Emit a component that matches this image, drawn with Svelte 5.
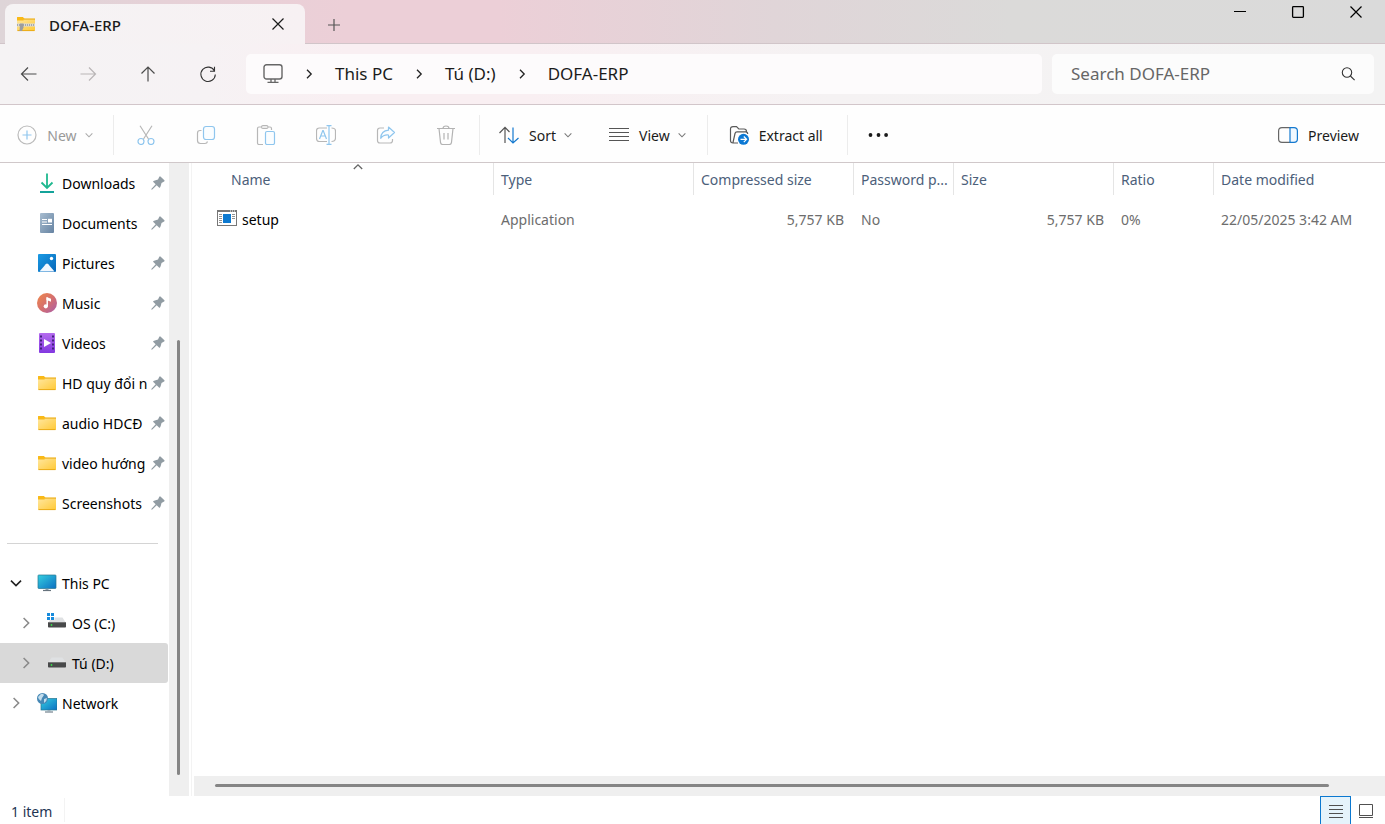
<script>
  const places = [
    { name: 'Downloads', icon: 'downloads' },
    { name: 'Documents', icon: 'documents' },
    { name: 'Pictures', icon: 'pictures' },
    { name: 'Music', icon: 'music' },
    { name: 'Videos', icon: 'videos' },
    { name: 'HD quy đổi n', icon: 'folder' },
    { name: 'audio HDCĐ', icon: 'folder' },
    { name: 'video hướng', icon: 'folder' },
    { name: 'Screenshots', icon: 'folder' }
  ];
  const devices = [
    { name: 'This PC', icon: 'pc', open: true },
    { name: 'OS (C:)', icon: 'osdrive', child: true },
    { name: 'Tú (D:)', icon: 'drive', child: true, selected: true },
    { name: 'Network', icon: 'network' }
  ];
  const columns = [
    { name: 'Name', width: 300 },
    { name: 'Type', width: 200 },
    { name: 'Compressed size', width: 160 },
    { name: 'Password p...', width: 100 },
    { name: 'Size', width: 160 },
    { name: 'Ratio', width: 100 },
    { name: 'Date modified' }
  ];
  const crumbs = ['This PC', 'Tú (D:)', 'DOFA-ERP'];
  const edits = ['Cut', 'Copy', 'Paste', 'Rename', 'Share', 'Delete'];
  let query = $state('');
</script>

{#snippet icon(name)}
  <svg class="icon" width="20" height="20" viewBox="0 0 20 20" fill="none" aria-hidden="true">
    {#if name === 'downloads'}
      <path d="M10 .5v14M4.500 9.500 10 15l5.500-5.500" stroke="#1fb88f" stroke-width="1.800" />
      <path d="M3 19h14" stroke="#14a39a" stroke-width="2" />
    {:else if name === 'documents'}
      <rect x="3" y="0" width="14" height="20" rx="1" fill="url(#docFill)" />
      <path d="M5 6.500h5M5 9h5M5 11.500h10" stroke="#fff" stroke-width="1.200" />
      <path d="M11 5.800h4v3.700h-4z" fill="#fff" />
    {:else if name === 'pictures'}
      <rect x="1" y="1" width="18" height="18" rx="1" fill="url(#picFill)" />
      <path d="m2.500 18.500 6.200-7.300q1.300-1.300 2.600 0l6.200 7.300z" fill="#f2f8ff" />
      <circle cx="14.500" cy="5.500" r="1.700" fill="#fff" />
    {:else if name === 'music'}
      <circle cx="10" cy="10" r="10" fill="url(#musFill)" />
      <circle cx="8.800" cy="13.300" r="2.100" fill="#fff" />
      <path d="M10.200 13.300V4.500" stroke="#fff" stroke-width="1.500" />
      <path d="M9.500 4 14 5.800v3l-4.500-1.800z" fill="#fff" />
    {:else if name === 'videos'}
      <rect x="2" y="0" width="16" height="20" rx="1" fill="url(#vidFill)" />
      <path d="M4 2.500v16M16 2.500v16" stroke="#43227c" stroke-width="2" stroke-dasharray="2 2" />
      <path d="m7 6 7 4-7 4z" fill="#fff" />
    {:else if name === 'folder' || name === 'zip'}
      <path d="M1 4q0-1 1-1h4.500l1.800 1.500H19V9H1z" fill="#f5b51e" />
      <rect x="1" y="5" width="18" height="12" rx="1" fill="url(#folFill)" />
      <path d="M1 4q0-1 1-1h4.500l1.800 1.500L7.500 6.500H1z" fill="#f9b917" />
      <path d="M8 5.300h11" stroke="#e9ad22" stroke-width=".8" />
      <path d="M1.500 16.600h17" stroke="#eaab17" stroke-width="1" />
      {#if name === 'zip'}
        <path d="M1 9.500h18v3H1z" fill="#d9dadb" />
        <path d="M1 11h18" stroke="#77797b" stroke-width="1.200" stroke-dasharray="1 1" />
        <path d="M4 9.500h3.500v4L6 17H3.500z" fill="#9c9d9e" />
      {/if}
    {:else if name === 'pc'}
      <rect x="1" y="2" width="18" height="13.500" rx=".7" fill="url(#pcFill)" stroke="#26768f" stroke-width=".7" />
      <path d="M10 15.800v1.500" stroke="#8fa3b2" stroke-width="3" />
      <path d="M6 17.500h8" stroke="#66737d" stroke-width="1.200" />
    {:else if name === 'osdrive' || name === 'drive'}
      <path d="M4.500 4.500h11L19 10H1z" fill="#dfe1e3" />
      <rect x="1" y="9" width="18" height="5.500" rx=".8" fill="#48494a" />
      <path d="M1 9.500h18" stroke="#777" />
      <circle cx="4.500" cy="12" r=".9" fill="#35dc4a" />
      {#if name === 'osdrive'}
        <path d="M0 0h7.500v7H0z" fill="#fff" />
        <path d="M0 0h3v3H0zM4 0h3v3H4zM0 4h3v3H0zM4 4h3v3H4z" fill="#178bdc" />
      {/if}
    {:else if name === 'network'}
      <rect x="4" y="5.500" width="16" height="11.500" fill="url(#pcFill)" stroke="#26768f" stroke-width=".7" />
      <path d="M8 19h8" stroke="#7d8c96" stroke-width="1.300" />
      <path d="M12 17v2" stroke="#9daeb8" stroke-width="3" />
      <circle cx="5.500" cy="5.500" r="5.500" fill="#4688b5" />
      <path d="M2 3q3-4 5-1L5 5 4 8Q1 6 1 4zM7 6l3-1q0 3-3 5z" fill="#c2dded" />
    {:else if name === 'app'}
      <rect x=".5" y="1.500" width="19" height="15" fill="#fff" stroke="#777" />
      <path d="M0 2h20" stroke="#777" stroke-width="2" />
      <path d="M13 2h1M15 2h1M17 2h1" stroke="#fff" />
      <path d="M2 5.500h3M2 7.500h3M2 9.500h3M2 11.500h3M2 13.500h3M15 5.500h3M15 7.500h3M15 9.500h3" stroke="#929292" />
      <rect x="6" y="5" width="8" height="9" fill="#0c79d0" />
    {:else if name === 'New'}
      <circle cx="10" cy="10" r="9" stroke="#bbb" stroke-width="1.200" />
      <path d="M10 5.500v9M5.500 10h9" stroke="#8fc6ee" stroke-width="1.200" />
    {:else if name === 'Cut'}
      <path d="M4 .8 12.500 14M16 .8 7.500 14" stroke="#b7b7b7" stroke-width="1.200" />
      <circle cx="5" cy="16.500" r="3" stroke="#8fc6ee" stroke-width="1.200" />
      <circle cx="15" cy="16.500" r="3" stroke="#8fc6ee" stroke-width="1.200" />
    {:else if name === 'Copy'}
      <path d="M5.500 5.500H4Q1.500 5.500 1.500 8v7.500q0 3 3 3H9q2 0 2.500-2" stroke="#b7b7b7" stroke-width="1.200" />
      <rect x="7.500" y="1.500" width="11" height="13" rx="2.500" fill="#fafdff" stroke="#8fc6ee" stroke-width="1.200" />
    {:else if name === 'Paste'}
      <path d="M7 19.500H3q-1.500 0-1.500-1.500V3.500Q1.500 2 3 2h2M12 2h2q1.500 0 1.500 1.500v1.500" stroke="#b7b7b7" stroke-width="1.200" />
      <rect x="5.500" y=".6" width="6.500" height="2.800" rx="1.400" stroke="#b7b7b7" stroke-width="1.100" />
      <rect x="9.500" y="6.500" width="9" height="13" rx="1.500" fill="#fafdff" stroke="#8fc6ee" stroke-width="1.200" />
    {:else if name === 'Rename'}
      <path d="M11 3H3.500Q.5 3 .5 6v7q0 3.500 3 3.500H11M15.500 3q4 0 4 3v7q0 3.500-4 3.500" stroke="#b7b7b7" stroke-width="1.200" />
      <path d="m3.500 14 3.300-8.500h.4l3.300 8.500M4.700 11h4.600M13 1v18M10.500.6h5M10.500 19.400h5" stroke="#8fc6ee" stroke-width="1.200" />
    {:else if name === 'Share'}
      <path d="M8 3H4Q1.500 3 1.500 5.500v10Q1.500 18 4 18h10q2.500 0 2.500-2.500V14" stroke="#b7b7b7" stroke-width="1.200" />
      <path d="M12.500 2 18.500 7.500l-6 5.500V10q-5-.5-7.800 3.300Q5 5.800 12.500 5.200z" fill="#fafdff" stroke="#8fc6ee" stroke-width="1.200" stroke-linejoin="round" />
    {:else if name === 'Delete'}
      <path d="M1 3.500h18M3 3.500l1.500 13.800q.3 2.200 2.200 2.200h6.600q1.900 0 2.200-2.200L17 3.500M7 3.500q0-2.500 3-2.500t3 2.500M8 8v6.500M12 8v6.500" stroke="#b3b3b3" stroke-width="1.200" />
    {:else if name === 'Sort'}
      <path d="M6 18V2.500M.5 8 6 2.300 10.500 7" stroke="#555" stroke-width="1.200" />
      <path d="M14 2.500V18M9 13l5 5 5.500-5" stroke="#1479cf" stroke-width="1.200" />
    {:else if name === 'View'}
      <path d="M0 3.500h20M0 7.500h20M0 11.500h20M0 15.500h20" stroke="#555" stroke-width="1.200" />
    {:else if name === 'Extract'}
      <path d="M9 18H4q-2.500 0-2.500-2.500V4Q1.500 1.700 4 1.700h3.500L9.800 4H15q2.500 0 2.500 2.500M4 17.500 6 8.500q.4-1.700 2-1.700h8.700q2 0 2 2.200" stroke="#5a5a5a" stroke-width="1.200" />
      <circle cx="14.500" cy="14.300" r="5.500" fill="#0b78d4" />
      <path d="M11.500 14.300h6M14.800 11.500l2.800 2.800-2.800 2.800" stroke="#fff" stroke-width="1.200" />
    {:else if name === 'Preview'}
      <path d="M12 2.700H4Q.6 2.700.6 6v8q0 3.300 3.400 3.300h8" stroke="#666" stroke-width="1.200" />
      <path d="M12 2.700h4q3.400 0 3.400 3.300v8q0 3.300-3.400 3.300h-4z" fill="#f0f8ff" stroke="#1479cf" stroke-width="1.200" />
    {:else if name === 'back'}
      <path d="M17.500 10H2.500M9 3.500 2.500 10l6.500 6.500" stroke="#4c4c4c" stroke-width="1.200" />
    {:else if name === 'forward'}
      <path d="M2.500 10h15M11 3.500l6.500 6.500-6.500 6.500" stroke="#b9b5b6" stroke-width="1.200" />
    {:else if name === 'up'}
      <path d="M10 17.500V3M3.500 9.500 10 3l6.500 6.500" stroke="#4c4c4c" stroke-width="1.200" />
    {:else if name === 'refresh'}
      <path d="M16.500 7A7.200 7.200 0 1 0 17.300 10.500M16.500 2.800v4.500H12" stroke="#333" stroke-width="1.100" />
    {:else if name === 'monitor'}
      <rect x="1" y="0.700" width="18" height="14.300" rx="2.500" stroke="#666" stroke-width="1.400" />
      <path d="M8 15v3M12 15v3M4.500 18.300h11" stroke="#666" stroke-width="1.300" />
    {:else if name === 'search'}
      <circle cx="9" cy="8.500" r="4.700" stroke="#333" stroke-width="1.100" />
      <path d="m12.400 12 4.200 4.200" stroke="#333" stroke-width="1.100" />
    {:else if name === 'close'}
      <path d="m4.500 4.500 11 11M15.500 4.500l-11 11" stroke="currentColor" stroke-width="1.200" />
    {:else if name === 'plus'}
      <path d="M10 4v12M4 10h12" stroke="#555" stroke-width="1.200" />
    {:else if name === 'minimize'}
      <path d="M4 9.500h12" stroke="#000" />
    {:else if name === 'maximize'}
      <rect x="4.600" y="4.600" width="10.800" height="10.800" rx=".8" stroke="#000" stroke-width="1.300" />
    {:else if name === 'more'}
      <circle cx="2.500" cy="10" r="1.900" fill="#1b1b1b" /><circle cx="10.500" cy="10" r="1.900" fill="#1b1b1b" /><circle cx="18.100" cy="10" r="1.900" fill="#1b1b1b" />
    {:else if name === 'list'}
      <path d="M3 4.500h14M3 8.500h14M3 12.500h14M3 16.500h14" stroke="#505050" />
    {:else if name === 'large'}
      <path d="M3.500 4.500h13v11h-13zM3 17.500h14" stroke="#505050" />
    {/if}
  </svg>
{/snippet}

{#snippet chevron(dir, color, size)}
  <svg class="chev {dir}" width={size} height={size} viewBox="0 0 10 10" fill="none" aria-hidden="true">
    <path d="m3 .8 4.200 4.200L3 9.200" stroke={color} stroke-width="1.300" />
  </svg>
{/snippet}

{#snippet pin()}
  <svg class="pin" width="14" height="14" viewBox="0 0 14 14" aria-hidden="true">
    <path d="M8.300.7q.7-.7 1.400 0l3.700 3.500q.6.700-.3 1.300L10.500 7q-.6 3-1.500 4.500-.5.500-1 0L5.700 9.300 1.300 13.500.3 13.700l.2-1L4.700 8.300 2.300 6q-.5-.6.200-1Q4.500 4 7 3.500z" fill="#919ca3" />
  </svg>
{/snippet}

<svg class="defs" width="0" height="0" aria-hidden="true">
  <defs>
    <linearGradient id="docFill" x2="1" y2="1"><stop stop-color="#a8bdd0" /><stop offset="1" stop-color="#6683a2" /></linearGradient>
    <linearGradient id="picFill" x2="1" y2="1"><stop stop-color="#1a9ae4" /><stop offset="1" stop-color="#0867b8" /></linearGradient>
    <linearGradient id="musFill" x2="1" y2="1"><stop stop-color="#f0894b" /><stop offset=".5" stop-color="#d6706d" /><stop offset="1" stop-color="#a85dab" /></linearGradient>
    <linearGradient id="vidFill" x2="0" y2="1"><stop stop-color="#b46bee" /><stop offset="1" stop-color="#8238e0" /></linearGradient>
    <linearGradient id="folFill" x2="1" y2="1"><stop stop-color="#ffe7a0" /><stop offset="1" stop-color="#ffc936" /></linearGradient>
    <linearGradient id="pcFill" x2="1" y2="1"><stop stop-color="#35cfe0" /><stop offset="1" stop-color="#0b6fc2" /></linearGradient>
  </defs>
</svg>

<div class="window">
  <header class="titlebar">
    <div class="tab">
      {@render icon('zip')}
      <span class="tab-name">DOFA-ERP</span>
      <button aria-label="Close tab">{@render icon('close')}</button>
    </div>
    <button class="add" aria-label="New tab">{@render icon('plus')}</button>
    <div class="controls">
      <button aria-label="Minimize">{@render icon('minimize')}</button>
      <button aria-label="Maximize">{@render icon('maximize')}</button>
      <button aria-label="Close">{@render icon('close')}</button>
    </div>
  </header>

  <div class="navbar">
    <div class="history">
      <button aria-label="Back">{@render icon('back')}</button>
      <button aria-label="Forward" disabled>{@render icon('forward')}</button>
      <button aria-label="Up">{@render icon('up')}</button>
      <button aria-label="Refresh">{@render icon('refresh')}</button>
    </div>
    <nav class="address" aria-label="Address">
      {@render icon('monitor')}
      {#each crumbs as crumb}
        {@render chevron('right', '#222', 10)}
        <a href="#top">{crumb}</a>
      {/each}
    </nav>
    <label class="search">
      <input type="text" placeholder="Search DOFA-ERP" aria-label="Search DOFA-ERP" bind:value={query} />
      {@render icon('search')}
    </label>
  </div>

  <div class="toolbar">
    <button class="new" disabled>{@render icon('New')}<span>New</span>{@render chevron('down', '#aaa', 8)}</button>
    <div class="group edits">
      {#each edits as edit}
        <button aria-label={edit} disabled>{@render icon(edit)}</button>
      {/each}
    </div>
    <div class="group sorting">
      <button>{@render icon('Sort')}<span>Sort</span>{@render chevron('down', '#777', 8)}</button>
      <button>{@render icon('View')}<span>View</span>{@render chevron('down', '#777', 8)}</button>
    </div>
    <div class="group extract">
      <button>{@render icon('Extract')}<span>Extract all</span></button>
    </div>
    <div class="group more">
      <button aria-label="See more">{@render icon('more')}</button>
    </div>
    <button class="preview">{@render icon('Preview')}<span>Preview</span></button>
  </div>

  <div class="body">
    <aside>
      <ul>
        {#each places as place}
          <li><a href="#top" class="place">{@render icon(place.icon)}<span>{place.name}</span>{@render pin()}</a></li>
        {/each}
      </ul>
      <hr />
      <ul>
        {#each devices as device}
          <li>
            <a href="#top" class="device" class:child={device.child} class:selected={device.selected}>
              {@render chevron(device.open ? 'down' : 'right', device.open ? '#222' : '#8a8a8a', 12)}
              {@render icon(device.icon)}
              <span>{device.name}</span>
            </a>
          </li>
        {/each}
      </ul>
    </aside>
    <div class="vscroll"><div class="thumb"></div></div>
    <main>
      <div class="files">
        <table>
          <colgroup>
            {#each columns as column}
              <col style:width={column.width ? `${column.width}px` : 'auto'} />
            {/each}
          </colgroup>
          <thead>
            <tr>
              {#each columns as column}
                <th scope="col"><div>{column.name}</div></th>
              {/each}
            </tr>
          </thead>
          <tbody>
            <tr>
              <td><div class="file">{@render icon('app')}<span>setup</span></div></td>
              <td>Application</td>
              <td class="number">5,757 KB</td>
              <td>No</td>
              <td class="number">5,757 KB</td>
              <td>0%</td>
              <td>22/05/2025 3:42 AM</td>
            </tr>
          </tbody>
        </table>
        <span class="sorted">{@render chevron('upward', '#666', 10)}</span>
      </div>
      <div class="hscroll"><div class="thumb"></div></div>
    </main>
  </div>

  <footer>
    <span class="count">1 item</span>
    <div class="modes">
      <button class="active" aria-label="Details view">{@render icon('list')}</button>
      <button aria-label="Large icons view">{@render icon('large')}</button>
    </div>
  </footer>
</div>

<style>
  :global(body) { margin: 0; }
  .window {
    display: flex;
    flex-direction: column;
    min-height: 100vh;
    background: #fff;
    color: #1b1b1b;
    font: 14px/20px "Noto Sans", "Open Sans", sans-serif;
  }
  .defs { position: absolute; }
  .icon, .chev, .pin { display: block; flex: none; }
  .down { transform: rotate(90deg); }
  .upward { transform: rotate(-90deg); }
  button {
    display: flex;
    align-items: center;
    justify-content: center;
    padding: 0;
    border: 0;
    background: none;
    color: inherit;
    font: inherit;
  }
  a { color: inherit; text-decoration: none; }
  ul { margin: 0; padding: 0; list-style: none; }
  .tab-name, .toolbar span, aside span, .file span { padding-top: 2px; }

  .titlebar {
    display: flex;
    align-items: flex-end;
    height: 44px;
    padding-left: 5px;
    background: linear-gradient(90deg, #ded5d8 0%, #e6d1d7 12%, #eccfd7 25%, #eccfd7 36%, #e0d5d8 56%, #dbdad9 73%, #dadada 100%);
    box-shadow: inset 0 -1px #d1c5c9;
  }
  .tab {
    display: flex;
    align-items: center;
    box-sizing: border-box;
    width: 300px;
    height: 40px;
    padding: 0 17px 0 11px;
    border-radius: 8px 8px 0 0;
    background: linear-gradient(90deg, #f5f3f4, #f7f1f3);
    font-size: 15px;
    font-weight: 500;
  }
  .tab-name { flex: 1; padding-left: 13px; }
  .add { width: 58px; height: 38px; }
  .controls { display: flex; align-self: flex-start; margin-left: auto; color: #000; }
  .controls button { width: 58px; height: 24px; }

  .navbar {
    display: flex;
    align-items: center;
    gap: 10px;
    height: 60px;
    padding-right: 11px;
    border-bottom: 1px solid #d2c6ca;
    background: linear-gradient(90deg, #f5f3f4 0%, #f6f2f4 15%, #f9eff2 25%, #f9eff2 38%, #f5f2f3 60%, #f3f3f3 100%);
  }
  .history { display: flex; width: 236px; }
  .history button { width: 60px; height: 40px; flex: none; }
  .history button:first-child { width: 58px; }
  .address, .search {
    display: flex;
    align-items: center;
    box-sizing: border-box;
    height: 40px;
    border-radius: 5px;
    background: #fdfbfc;
    font-size: 17px;
  }
  .address { flex: 1; gap: 21px; padding-left: 17px; }
  .search { width: 322px; padding: 0 16px 0 19px; background: #fcfcfc; }
  .search input {
    flex: 1;
    min-width: 0;
    padding: 0;
    border: 0;
    outline: 0;
    background: none;
    font: inherit;
  }
  .search input::placeholder { color: #666; opacity: 1; }

  .toolbar {
    display: flex;
    align-items: center;
    height: 55px;
    padding: 2px 26px 0 17px;
    border-bottom: 1px solid #d0c8ca;
    background: #fefefe;
  }
  .toolbar button { gap: 10px; height: 40px; }
  .toolbar .chev { margin-left: -2px; }
  .new { width: 76px; color: #999; }
  .group { display: flex; align-items: center; height: 40px; border-left: 1px solid #ececec; }
  .edits { margin-left: 20px; padding: 0 3px 0 2px; }
  .edits button { width: 60px; }
  .sorting { gap: 37px; padding: 0 21px 0 19px; }
  .extract { padding: 0 24px 0 21px; }
  .more { padding-left: 20px; }
  .preview { margin-left: auto; }

  .body { display: flex; flex: 1; }
  aside { width: 169px; color: #000; }
  .place, .device { display: flex; align-items: center; height: 40px; box-sizing: border-box; }
  .place { padding: 0 4px 0 37px; }
  .place span { flex: 1; min-width: 0; padding-left: 5px; overflow: hidden; white-space: nowrap; }
  .pin { margin-left: 3px; }
  .device { gap: 5px; margin-right: 1px; padding-left: 10px; border-radius: 0 3px 3px 0; }
  .device .icon { margin-left: 10px; }
  .child { padding-left: 20px; }
  .selected { background: #d9d9d9; }
  hr { height: 1px; margin: 20px 11px 19px 7px; border: 0; background: #d4d4d4; }
  .vscroll { display: flex; flex-direction: column; width: 20px; padding-bottom: 21px; box-sizing: border-box; background: #efefef; }
  .vscroll .thumb { width: 3px; height: 71%; margin: auto 8px 0; border-radius: 2px; background: #858585; }
  main { display: flex; flex: 1; flex-direction: column; min-width: 0; margin-left: 2px; border-left: 1px solid #f3f3f3; padding-left: 2px; }
  .files { position: relative; flex: 1; }
  table { width: 100%; border-collapse: collapse; table-layout: fixed; color: #6d6d6d; }
  th, td { padding: 0; text-align: left; font-weight: 400; white-space: nowrap; }
  th { height: 36px; vertical-align: top; color: #4c607a; }
  th div { height: 32px; padding-left: 7px; border-right: 1px solid #e5e5e5; line-height: 34px; }
  th:first-child div { padding-left: 37px; }
  th:last-child div { border: 0; }
  td { height: 38px; padding: 2px 0 0 7px; }
  td:first-child { height: 40px; padding-top: 0; }
  td.number { padding-right: 10px; text-align: right; }
  .file { display: flex; align-items: center; gap: 5px; padding-left: 16px; color: #000; }
  .sorted { position: absolute; top: -1px; left: 159px; }
  .hscroll { box-sizing: border-box; height: 20px; padding: 8px 56px 0 21px; background: #efefef; }
  .hscroll .thumb { height: 3px; border-radius: 2px; background: #858585; }

  footer { display: flex; height: 28px; padding-left: 11px; color: #1f3553; }
  .count { align-self: center; padding: 4px 12px 0 0; border-right: 1px solid #f3f3f3; }
  .modes { display: flex; margin-left: auto; padding-right: 4px; }
  .modes button { box-sizing: border-box; width: 30px; height: 28px; }
  .modes .active { width: 31px; border: 1px solid #0b78d0; border-bottom: 0; background: #e5f3fb; }
</style>
